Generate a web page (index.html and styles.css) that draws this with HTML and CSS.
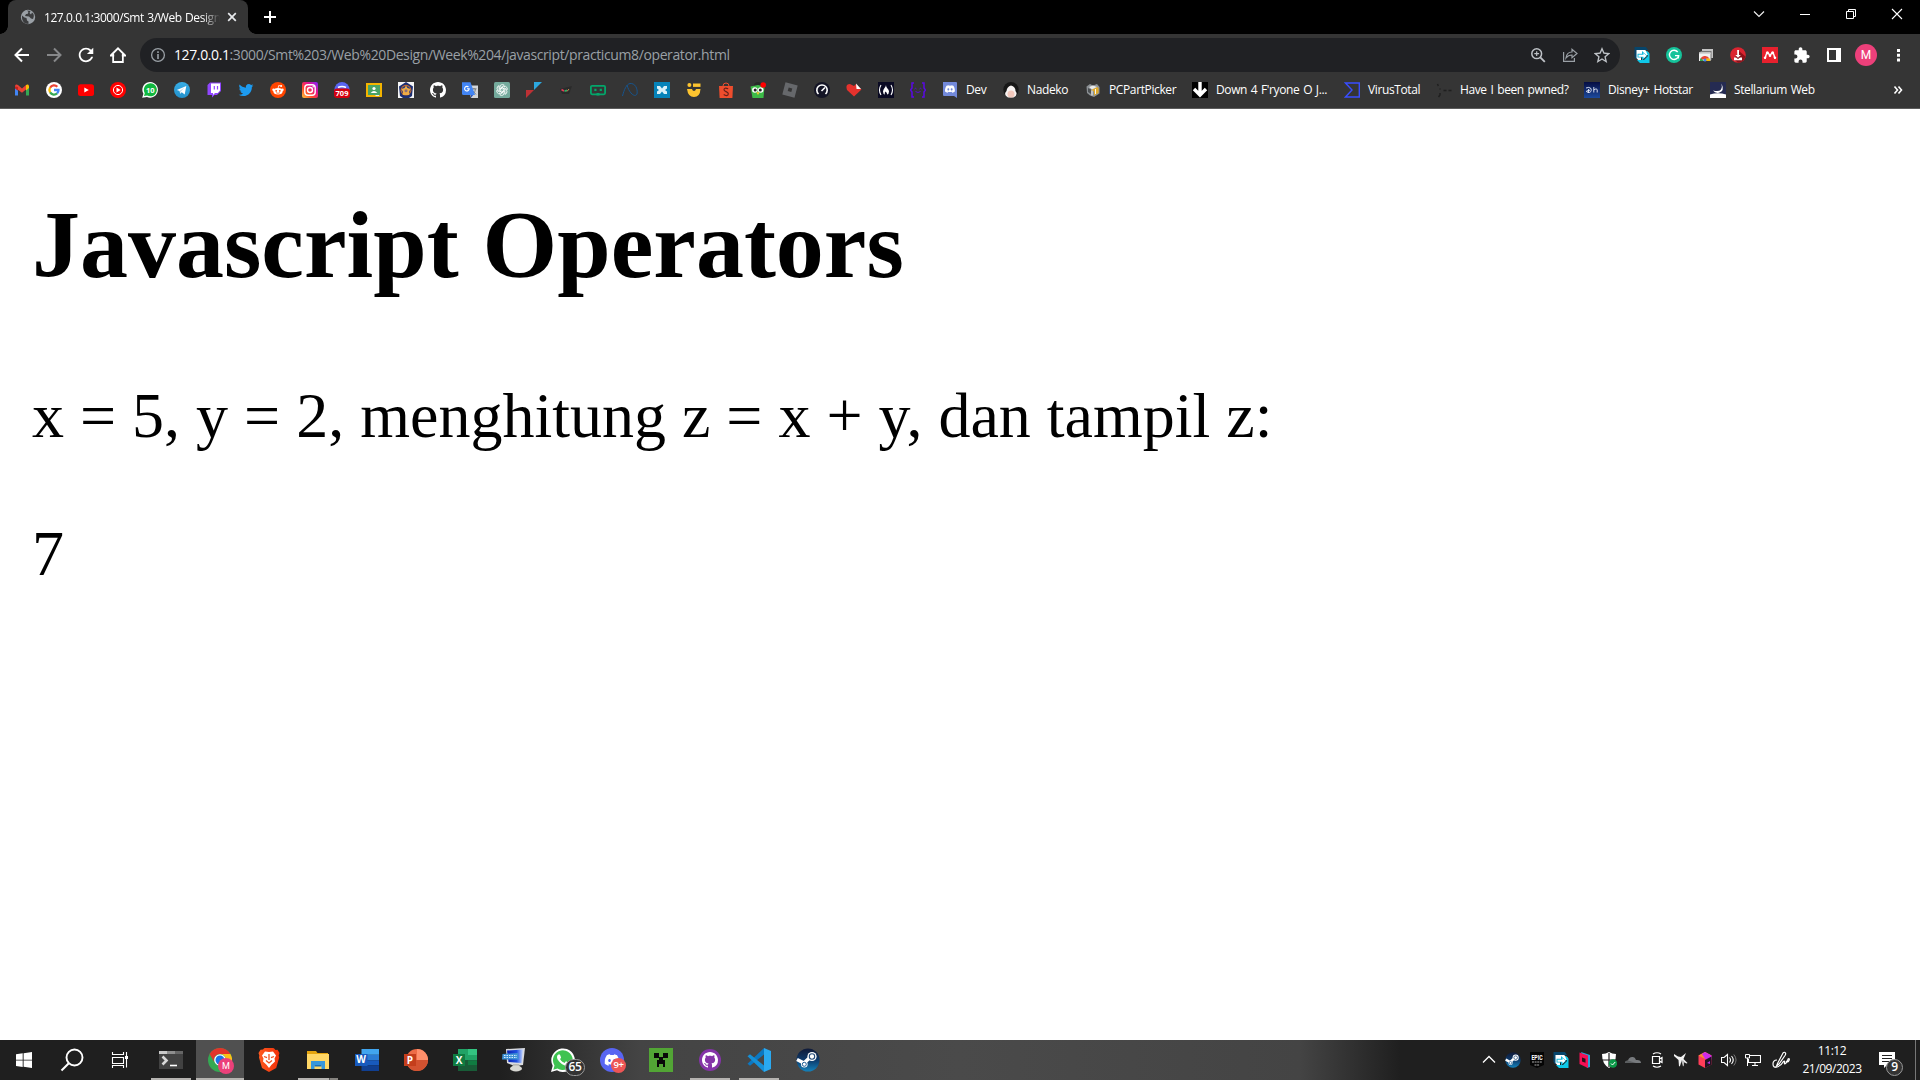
FILE: index.html
```html
<!DOCTYPE html>
<html lang="en">
<head>
<meta charset="utf-8">
<title>127.0.0.1:3000/Smt 3/Web Design</title>
<link rel="stylesheet" href="styles.css">
</head>
<body>
<svg class="defs" width="0" height="0">
  <defs>
    <linearGradient id="insta" x1="0" y1="1" x2="1" y2="0"><stop offset="0" stop-color="#ffc83d"/><stop offset=".35" stop-color="#ff4a2c"/><stop offset=".65" stop-color="#e5128f"/><stop offset="1" stop-color="#7a28ff"/></linearGradient>
    <linearGradient id="steam" x1="0" y1="0" x2="0" y2="1"><stop offset="0" stop-color="#101a38"/><stop offset=".5" stop-color="#0d3a6b"/><stop offset="1" stop-color="#1482bb"/></linearGradient>
    <linearGradient id="hotstar" x1="0" y1="0" x2="0" y2="1"><stop offset="0" stop-color="#060d42"/><stop offset="1" stop-color="#1d4a9c"/></linearGradient>
    <linearGradient id="screen" x1="0" y1="0" x2="1" y2="0"><stop offset="0" stop-color="#0a1fae"/><stop offset=".6" stop-color="#1e4fe0"/><stop offset="1" stop-color="#c4d6ff"/></linearGradient>
    <linearGradient id="tele" x1="0" y1="0" x2="0" y2="1"><stop offset="0" stop-color="#38aee6"/><stop offset="1" stop-color="#2290cb"/></linearGradient>
    <linearGradient id="brave" x1="0" y1="0" x2="1" y2="0"><stop offset="0" stop-color="#ff5a1f"/><stop offset="1" stop-color="#f0300a"/></linearGradient>
    <symbol id="github" viewBox="0 0 16 16"><path fill="#fff" d="M8 0C3.58 0 0 3.58 0 8c0 3.54 2.29 6.53 5.47 7.59.4.07.55-.17.55-.38 0-.19-.01-.82-.01-1.49-2.01.37-2.53-.49-2.69-.94-.09-.23-.48-.94-.82-1.13-.28-.15-.68-.52-.01-.53.63-.01 1.08.58 1.23.82.72 1.21 1.87.87 2.33.66.07-.52.28-.87.51-1.07-1.78-.2-3.64-.89-3.64-3.95 0-.87.31-1.59.82-2.15-.08-.2-.36-1.02.08-2.12 0 0 .67-.21 2.2.82.64-.18 1.32-.27 2-.27s1.36.09 2 .27c1.53-1.04 2.2-.82 2.2-.82.44 1.1.16 1.92.08 2.12.51.56.82 1.27.82 2.15 0 3.07-1.87 3.75-3.65 3.95.29.25.54.73.54 1.48 0 1.07-.01 1.93-.01 2.2 0 .21.15.46.55.38A8.01 8.01 0 0016 8c0-4.42-3.58-8-8-8z"/></symbol>
    <symbol id="discord" viewBox="0 0 24 24"><path fill="#fff" d="M20.317 4.37a19.79 19.79 0 0 0-4.885-1.515c-.21.375-.444.865-.608 1.25a18.27 18.27 0 0 0-5.487 0c-.164-.39-.405-.874-.618-1.25A19.74 19.74 0 0 0 3.677 4.37C.533 9.046-.32 13.58.1 18.058a19.9 19.9 0 0 0 5.993 3.03c.462-.63.873-1.295 1.226-1.994a13 13 0 0 1-1.872-.892l.372-.292c3.928 1.793 8.18 1.793 12.062 0l.373.292a12.3 12.3 0 0 1-1.873.892c.36.698.772 1.362 1.225 1.993a19.84 19.84 0 0 0 6.002-3.03c.5-5.177-.838-9.674-3.549-13.66zM8.02 15.33c-1.183 0-2.157-1.085-2.157-2.419s.956-2.419 2.157-2.419c1.21 0 2.176 1.095 2.157 2.42 0 1.333-.956 2.418-2.157 2.418zm7.975 0c-1.183 0-2.157-1.085-2.157-2.419s.955-2.419 2.157-2.419c1.21 0 2.176 1.095 2.157 2.42 0 1.333-.946 2.418-2.157 2.418z"/></symbol>
    <symbol id="steamlogo" viewBox="0 0 24 24"><circle cx="12" cy="12" r="11.5" fill="url(#steam)"/><path d="M1 11.5 8 15l7-6.500" stroke="#fff" stroke-width="3.600" fill="none"/><circle cx="16" cy="8.500" r="4.600" fill="#fff"/><circle cx="16" cy="8.500" r="2.700" fill="none" stroke="#234a78" stroke-width="1.100"/><circle cx="8.300" cy="16.300" r="3.300" fill="#fff"/><circle cx="8.300" cy="16.300" r="2" fill="none" stroke="#1b5c96" stroke-width="1"/></symbol>
    <symbol id="flow" viewBox="0 0 16 16"><path d="M.5 0H12l2 3H3v9H2L.5 10z" fill="#07456b"/><path d="M2.500 3H11l4 3v2H7v6H5l-2.500-3z" fill="#fff"/><path d="M12 4h1l2.500 2.500V16H6l-3-3h7L14 9z" fill="#0fc8e8"/><path d="M3.500 6.800H8V4l5.200 4.700L8 13.500v-3H3.500z" fill="#12b9de"/><path d="M4.500 7.800h5V6l3 2.700-3 2.800V9.800h-5z" fill="#fff"/></symbol>
  </defs>
</svg>

<header class="browser">
  <div class="tabstrip">
    <div class="tab">
      <svg class="i16" viewBox="0 0 16 16"><circle cx="8" cy="8" r="7.200" fill="#9aa0a6"/><path d="M2 6.500l2.500 2 2 .5.500 2.500 1.500 1V15C4 15 1.500 11.500 2 6.500zM7 1.500l1.500 1.500-1 2H6L5 7l4 .5 2 2 2 .5c1-2 1.500-5-1-6.500L11 5.500 9.500 4l1-2z" fill="#3b3c3e"/></svg>
      <span class="tab-title">127.0.0.1:3000/Smt 3/Web Design</span>
      <svg class="i16 tab-close" viewBox="0 0 16 16"><path d="M4.200 4.200l7.600 7.600M11.800 4.200l-7.600 7.600" stroke="#e8eaed" stroke-width="1.700"/></svg>
    </div>
    <svg class="newtab" viewBox="0 0 16 16"><path d="M8 2v12M2 8h12" stroke="#fff" stroke-width="2"/></svg>
    <div class="controls">
      <svg viewBox="0 0 46 28"><path d="M18 11.500l5 5 5-5" fill="none" stroke="#eee" stroke-width="1.200"/></svg>
      <svg viewBox="0 0 46 28"><path d="M18 14.500h10" stroke="#fff"/></svg>
      <svg viewBox="0 0 46 28"><path d="M18.500 11.500h7v7h-7zM20.500 11.500v-2h7v7h-2" fill="none" stroke="#fff"/></svg>
      <svg viewBox="0 0 46 28"><path d="M18 9l10 10M28 9l-10 10" stroke="#fff" stroke-width="1.100"/></svg>
    </div>
  </div>

  <div class="toolbar">
    <nav class="nav">
      <svg class="i16" viewBox="0 0 16 16"><path d="M15 8H2M8 1.500L1.500 8 8 14.500" fill="none" stroke="#fff" stroke-width="2"/></svg>
      <svg class="i16" viewBox="0 0 16 16"><path d="M1 8h13M8 1.500L14.500 8 8 14.500" fill="none" stroke="#87888a" stroke-width="2"/></svg>
      <svg class="i16" viewBox="3.200 3.200 17.600 17.600"><path fill="#fff" d="M17.650 6.350C16.200 4.900 14.210 4 12 4c-4.420 0-7.990 3.580-7.990 8s3.570 8 7.990 8c3.730 0 6.840-2.550 7.730-6h-2.080c-.82 2.330-3.040 4-5.650 4-3.310 0-6-2.690-6-6s2.690-6 6-6c1.660 0 3.140.69 4.220 1.780L13 11h7V4l-2.350 2.350z"/></svg>
      <svg class="i16" viewBox="0 0 16 16"><path d="M3.200 7v8h9.600V7M.8 8.500L8 1.400l7.200 7.100z" fill="none" stroke="#fff" stroke-width="1.900"/><path d="M4.200 7h7.600v7H4.200z" fill="#353535"/></svg>
    </nav>
    <div class="omnibox">
      <svg class="i16" viewBox="0 0 16 16"><circle cx="8" cy="8" r="6.400" fill="none" stroke="#9aa0a6" stroke-width="1.300"/><path d="M8 7v5M8 4.200V6" stroke="#9aa0a6" stroke-width="1.600"/></svg>
      <span class="url"><b>127.0.0.1</b>:3000/Smt%203/Web%20Design/Week%204/javascript/practicum8/operator.html</span>
      <svg class="i16" viewBox="0 0 16 16"><circle cx="6.700" cy="6.700" r="4.900" fill="none" stroke="#bdc1c6" stroke-width="1.500"/><path d="M10.300 10.300l4.500 4.500" stroke="#bdc1c6" stroke-width="1.900"/><path d="M6.700 4.300v4.800M4.300 6.700h4.800" stroke="#bdc1c6" stroke-width="1.200"/></svg>
      <svg class="i16" viewBox="0 0 16 16"><path d="M1.600 5v9.400h10.800V11" fill="none" stroke="#9aa0a6" stroke-width="1.200"/><path d="M4 11c.5-4 3-6 6-6V2.200L15 6.500l-5 4.200V8C7.500 8 5.500 9 4 11z" fill="none" stroke="#9aa0a6" stroke-width="1.200"/></svg>
      <svg class="i16" viewBox="2.800 2 18.400 19"><path fill="#bdc1c6" d="M22 9.240l-7.190-.62L12 2 9.190 8.630 2 9.240l5.460 4.730L5.820 21 12 17.270 18.180 21l-1.630-7.030L22 9.240zM12 15.400l-3.760 2.270 1-4.280-3.320-2.880 4.380-.38L12 6.100l1.710 4.040 4.380.38-3.320 2.880 1 4.280L12 15.400z"/></svg>
    </div>
    <div class="extensions">
      <svg class="i16" viewBox="0 0 16 16"><use href="#flow"/></svg>
      <svg class="i16" viewBox="0 0 16 16"><circle cx="8" cy="8" r="8" fill="#15c39a"/><path d="M11.700 5A4.600 4.600 0 1 0 12.600 8.600H9M12.700 8.500l-.5 3" fill="none" stroke="#fff" stroke-width="1.400"/></svg>
      <svg class="i16" viewBox="0 0 16 16"><path d="M4 2h11v9H4z" fill="#c4c4c4"/><path d="M2.500 4h11v9h-11z" fill="#777"/><path d="M1 5.500h11.500V14H1z" fill="#f1f1f1"/><path d="M1 5.500h11.500V7H1z" fill="#d5d5d5"/><path d="M2.200 13a5 5 0 0 1 9.300-1.500L8 12z" fill="#ea4335"/><path d="M2 14q-.3-1.500.8-3L6 14z" fill="#34a853"/><path d="M8 11.500h3.500q.7 1 .7 2.500H8z" fill="#fbbc04"/><circle cx="7" cy="13" r="1.500" fill="#4285f4"/></svg>
      <svg class="i16" viewBox="0 0 16 16"><circle cx="8" cy="8" r="7.800" fill="#db2430"/><path d="M9 4l6.500 5.500A8 8 0 0 1 8 15.800L4 12z" fill="#8d1119"/><path d="M7.200 3h1.800v5h1.800L8 10.800 5.300 8h1.900z" fill="#fff"/><path d="M4 10.500h2l2 1.500 2-1.500h2v2.800H4z" fill="#fff"/></svg>
      <svg class="i16" viewBox="0 0 16 16"><path d="M0 0h16v16H0z" fill="#e8212e"/><path d="M3 11.500C4.500 9.500 3 6.500 5.500 6.200 7.500 6 7 8.500 8 8.500s.5-2.500 2.500-2.300c2.500.3 1 3.300 2.500 5.300" fill="none" stroke="#fff" stroke-width="1.500"/><circle cx="5.400" cy="5.800" r="1.500" fill="#fff"/><circle cx="10.600" cy="5.800" r="1.500" fill="#fff"/><circle cx="8" cy="8.800" r="1.300" fill="#fff"/><circle cx="3" cy="10.800" r="1.200" fill="#fff"/><circle cx="13" cy="10.800" r="1.200" fill="#fff"/></svg>
      <svg class="i16" viewBox="1.500 .5 22 22"><path fill="#fff" d="M20.500 11H19V7c0-1.100-.9-2-2-2h-4V3.500C13 2.120 11.880 1 10.500 1S8 2.120 8 3.500V5H4c-1.100 0-1.990.9-1.990 2v3.800H3.500c1.490 0 2.700 1.210 2.700 2.700s-1.210 2.700-2.700 2.700H2V20c0 1.100.9 2 2 2h3.800v-1.500c0-1.490 1.210-2.700 2.700-2.700 1.490 0 2.700 1.210 2.700 2.700V22H17c1.100 0 2-.9 2-2v-4h1.500c1.380 0 2.500-1.120 2.500-2.500S21.880 11 20.500 11z"/></svg>
      <svg class="i16" viewBox="0 0 16 16"><path d="M1 1h14v14H1zM3 3v10h7V3z" fill="#fff" fill-rule="evenodd"/></svg>
      <span class="avatar">M</span>
      <svg class="i16" viewBox="0 0 16 16"><path d="M7 2h3v3H7zM7 6.800h3v3H7zM7 11.600h3v3H7z" fill="#fff"/></svg>
    </div>
  </div>

  <div class="bookmarks">
    <svg class="i16" viewBox="0 0 16 16"><path d="M1 3.500v10h3V8z" fill="#4285f4"/><path d="M15 3.500v10h-3V8z" fill="#34a853"/><path d="M1 4.500C1 2 3 2 4 3l4 3.500L12 3v4.500L8 10.800 1 5.500z" fill="#ea4335"/><path d="M12 3c1-1 3-1 3 1.500V6l-3 2.500z" fill="#fbbc04"/><path d="M1 4.500v2l3 2.200V5z" fill="#c5221f"/></svg>
    <svg class="i16" viewBox="0 0 16 16"><circle cx="8" cy="8" r="8" fill="#fff"/><g fill="none" stroke-width="2.300"><path d="M11.300 4.700A4.600 4.600 0 0 0 4.100 5.700" stroke="#ea4335"/><path d="M4.100 5.700a4.600 4.600 0 0 0 0 4.700" stroke="#fbbc05"/><path d="M4.100 10.400a4.600 4.600 0 0 0 7 1" stroke="#34a853"/><path d="M11.100 11.400A4.600 4.600 0 0 0 12.500 8H8" stroke="#4285f4"/></g></svg>
    <svg class="i16" viewBox="0 0 16 16"><rect y="2.300" width="16" height="11.600" rx="2.500" fill="#f00"/><path d="M6.300 5.500v5L10.800 8z" fill="#fff"/></svg>
    <svg class="i16" viewBox="0 0 16 16"><circle cx="8" cy="8" r="8" fill="#f00"/><circle cx="8" cy="8" r="4.600" fill="none" stroke="#fff"/><path d="M6.500 5.500v5L10.700 8z" fill="#fff"/></svg>
    <svg class="i16" viewBox="0 0 16 16"><path d="M.2 15.800l1.200-4A7.800 7.800 0 1 1 5 15z" fill="#fff"/><path d="M2 14l.8-2.800A6.500 6.500 0 1 1 5.200 13.500z" fill="#11b83f"/><text x="8.200" y="10.900" class="badge-num" text-anchor="middle">10</text></svg>
    <svg class="i16" viewBox="0 0 16 16"><circle cx="8" cy="8" r="8" fill="url(#tele)"/><path d="M2.800 7.900l9.500-3.900-1.600 8.400-3-2.100-1.500 1.500-.5-2.900z" fill="#fff"/><path d="M5.500 9l5-3.500-3.900 4.300-.4 2z" fill="#b9d9ec"/></svg>
    <svg class="i16" viewBox="0 0 16 16"><path d="M1.500 3L4 .5h11v8.500l-4 4H8.500L6 15.500V13H1.500z" fill="#9146ff"/><path d="M5 1.500h9v7L11.800 11H9l-2 2v-2H5z" fill="#fff"/><path d="M8.300 4v3.500M11.500 4v3.500" stroke="#9146ff" stroke-width="1.200"/></svg>
    <svg class="i16" viewBox="-1 0 26 24"><path fill="#1d9bf0" d="M23.953 4.570a10 10 0 01-2.825.775 4.958 4.958 0 002.163-2.723c-.951.555-2.005.959-3.127 1.184a4.920 4.920 0 00-8.384 4.482C7.690 8.095 4.067 6.130 1.640 3.162a4.822 4.822 0 00-.666 2.475c0 1.710.87 3.213 2.188 4.096a4.904 4.904 0 01-2.228-.616v.06a4.923 4.923 0 003.946 4.827 4.996 4.996 0 01-2.212.085 4.936 4.936 0 004.604 3.417 9.867 9.867 0 01-6.102 2.105c-.39 0-.779-.023-1.170-.067a13.995 13.995 0 007.557 2.209c9.053 0 13.998-7.496 13.998-13.985 0-.21 0-.42-.015-.63A9.935 9.935 0 0024 4.590z"/></svg>
    <svg class="i16" viewBox="0 0 16 16"><circle cx="8" cy="8" r="8" fill="#ff4500"/><ellipse cx="8" cy="9.300" rx="4.600" ry="3.200" fill="#fff"/><circle cx="3.500" cy="7.800" r="1.200" fill="#fff"/><circle cx="12.500" cy="7.800" r="1.200" fill="#fff"/><path d="M8 6.500l.7-3 2.300.5" stroke="#fff" stroke-width=".8" fill="none"/><circle cx="11.200" cy="4" r="1" fill="#fff"/><circle cx="6.200" cy="8.800" r=".9" fill="#ff4500"/><circle cx="9.800" cy="8.800" r=".9" fill="#ff4500"/><path d="M6 10.700q2 1.200 4 0" stroke="#ff4500" stroke-width=".7" fill="none"/></svg>
    <svg class="i16" viewBox="0 0 16 16"><rect width="16" height="16" rx="2" fill="url(#insta)"/><rect x="2.800" y="2.800" width="10.400" height="10.400" rx="3" fill="none" stroke="#fff" stroke-width="1.400"/><circle cx="8" cy="8" r="2.500" fill="none" stroke="#fff" stroke-width="1.400"/><circle cx="11.200" cy="4.800" r=".8" fill="#fff"/></svg>
    <svg class="i16" viewBox="0 0 16 16"><circle cx="8" cy="7.500" r="7.500" fill="#5865f2"/><path d="M4 5.500q4-2 8 0" stroke="#fff" stroke-width="1.500" fill="none"/><rect y="6.500" width="16" height="9.500" rx="3" fill="#d3000f"/><text x="8" y="14.200" class="badge-num" text-anchor="middle">709</text></svg>
    <svg class="i16" viewBox="0 0 16 16"><path d="M0 1h16v14H0z" fill="#f4b400"/><path d="M2 3h12v10H2z" fill="#4aa366"/><circle cx="8" cy="6.500" r="1.600" fill="#fff"/><path d="M4.600 11q3.400-4 6.800 0z" fill="#fff"/><path d="M9.500 13H13v1H9.500z" fill="#eee"/></svg>
    <svg class="i16" viewBox="0 0 16 16"><path d="M0 0h16v16H0z" fill="#f5f5f5"/><path d="M8 0l7 4.500L14 14l-3 2H5l-3-2L1 4.500z" fill="#1c2f72"/><circle cx="8" cy="8.200" r="5.400" fill="#c56b31"/><circle cx="8" cy="8.200" r="4.300" fill="#223c80"/><path d="M8 3.500l1.500 2.500 3 1-1.500 3 .3 3H4.700L5 10 3.500 7l3-1z" fill="#edab46"/><circle cx="8" cy="8.800" r="1.500" fill="#8a6f7a"/></svg>
    <svg class="i16" viewBox="0 0 16 16"><use href="#github"/></svg>
    <svg class="i16" viewBox="0 0 16 16"><path d="M6 3.500h10V16H9z" fill="#d3d5d8"/><path d="M9.500 6.800h5M12 6v1.500M10.500 12q3-2 3-5M10.500 8.500l3.500 4" stroke="#72767b" fill="none" stroke-width=".9"/><path d="M0 .3h8.500L13 13H1.500Q0 13 0 11.500z" fill="#4285f4"/><path d="M8.800 13h2.500L9 15.800z" fill="#3056b5"/><path d="M6.500 5A2.300 2.300 0 1 0 7.200 6.800H5" fill="none" stroke="#fff" stroke-width="1.100"/></svg>
    <svg class="i16" viewBox="0 0 16 16"><rect width="16" height="16" rx="1.500" fill="#74aa9c"/><g fill="none" stroke="#fff" stroke-width=".8"><path id="petal" d="M6 9.200V5q0-2.500 2.300-2.500 1.200 0 2 .8L7.500 5v2.200"/><use href="#petal" transform="rotate(60 8 8)"/><use href="#petal" transform="rotate(120 8 8)"/><use href="#petal" transform="rotate(180 8 8)"/><use href="#petal" transform="rotate(240 8 8)"/><use href="#petal" transform="rotate(300 8 8)"/></g></svg>
    <svg class="i16" viewBox="0 0 16 16"><path d="M8 0h8L8 8z" fill="#2ca8df"/><path d="M0 8h8l-8 8z" fill="#bd3034"/></svg>
    <svg class="i16" viewBox="0 0 16 16"><path d="M2 7l12-3-3 8H4z" fill="#2a2a2a"/><path d="M3.500 7.500l2.500 1.500" stroke="#e33b59" stroke-width="1.600"/><path d="M6.500 9.200l2.500-1" stroke="#2fb36b" stroke-width="1.500"/><path d="M9 9.500l2-2.500" stroke="#c89050"/></svg>
    <svg class="i16" viewBox="0 0 16 16"><rect x=".9" y="3.900" width="14.200" height="8.400" rx="1.200" fill="none" stroke="#03a66a" stroke-width="1.800"/><path d="M4.300 6.700h2.200v2.200H4.300zM9.700 6.700h2.200v2.200H9.700zM6.500 11h3v2.500h-3z" fill="#03a66a"/></svg>
    <svg class="i16" viewBox="0 0 16 16"><path d="M.5 14C2 8 4.500 2 8 1.500c5-.5 8 5 7 10.500-2 4-8-1-10-9" fill="none" stroke="#17548c" stroke-width="1"/></svg>
    <svg class="i16" viewBox="0 0 16 16"><path d="M0 0h16v16H0z" fill="#0683b9"/><path d="M3 4h3l2 2.500L10 4h3v2.500L11 8l2 1.500V12h-3L8 9.500 6 12H3V9.500L5 8 3 6.500z" fill="#d9f0f8"/></svg>
    <svg class="i16" viewBox="0 0 16 16"><circle cx="3.400" cy="3" r="2" fill="#fdc42f"/><path d="M7 1.500h7.500v3.400H7z" fill="#fdc42f"/><path d="M1 7h5q.5 2 2 2t2-2h4.500q-.5 8-6.500 8T1 7z" fill="#fdc42f"/></svg>
    <svg class="i16" viewBox="0 0 16 16"><path d="M5 4q0-3 3-3t3 3" fill="none" stroke="#ee4d2d" stroke-width="1"/><path d="M1 4h14l-.6 12H1.600z" fill="#ee4d2d"/><path d="M10.200 6.800Q6 5.200 6 7.800c0 2.200 4.300 1.500 4.300 4 0 2.600-3 2-4.600.8" fill="none" stroke="#64201a" stroke-width="1.200"/></svg>
    <svg class="i16" viewBox="0 0 16 16"><path d="M4 4q0-4 4-4t4 4" fill="#292929"/><path d="M.5 4.500L8 3l6.500 1.500L13.500 16h-11z" fill="#3dbb48"/><circle cx="4.900" cy="8" r="2.800" fill="#fff"/><circle cx="10.700" cy="8" r="2.800" fill="#fff"/><circle cx="5.200" cy="8" r="1.500" fill="#222"/><circle cx="10.300" cy="8" r="1.500" fill="#222"/><path d="M6.300 10.200h3.200L8 13z" fill="#ffc72d"/><circle cx="13.200" cy="3" r="2.800" fill="#f00"/></svg>
    <svg class="i16" viewBox="0 0 16 16"><path d="M3.500.3l12.200 3.300-3.200 12.100L.3 12.400zM6.700 5.500L5.700 9l3.600 1 1-3.500z" fill="#66686b" fill-rule="evenodd"/></svg>
    <svg class="i16" viewBox="0 0 16 16"><circle cx="8" cy="8" r="8" fill="#141526"/><path d="M4.500 12a5.200 5.200 0 1 1 7 0" fill="none" stroke="#fff" stroke-width="1.600"/><path d="M7.500 9L11 5.500" stroke="#fff" stroke-width="1.600"/></svg>
    <svg class="i16" viewBox="0 0 16 16"><path d="M8 14.500L1 8Q-1 2 4 2l4 2 2-2 5.500 5.500z" fill="#e5322d"/><path d="M10 1.500L15 7h-4.500z" fill="#fff"/></svg>
    <svg class="i16" viewBox="0 0 16 16"><path d="M0 0h16v16H0z" fill="#0a0a23"/><path d="M3 3q-3 5 0 10M13 3q3 5 0 10" fill="none" stroke="#fff" stroke-width="1.100"/><path d="M8 3c0 2-3 4-3 6.500Q5 12 7 12.500 6 11 7.500 9.500 9.500 11 9 12.500q2-.5 2-3C11 7 8 6 8 3z" fill="#fff"/></svg>
    <svg class="i16" viewBox="0 0 16 16"><path d="M4 1H2v5L.5 8 2 10v5h2M12 1h2v5l1.500 2-1.500 2v5h-2" fill="none" stroke="#5a08e5" stroke-width="1.500"/><path d="M4.500 7q1-1.500 2 0M9.500 7q1-1.500 2 0M5.500 9.500q2.500 2 5 0" fill="none" stroke="#5a08e5" stroke-width=".9"/></svg>
    <div class="bm"><svg class="i16" viewBox="0 0 16 16"><path d="M1 0h13q1 0 1 1v15l-3-2H2q-1 0-1-1z" fill="#7289da"/><use href="#discord" x="3" y="2" width="10" height="10"/></svg><span class="w-dev">Dev</span></div>
    <div class="bm"><svg class="i16" viewBox="0 0 16 16"><circle cx="8" cy="7.700" r="7.700" fill="#171717"/><path d="M8 3.500q4.500 1 4.500 5.500 3 4-2 6.500H5Q0 13 3.500 9q.5-4.500 4.500-5.500z" fill="#f7f3f2"/><ellipse cx="8" cy="12" rx="3.500" ry="3.500" fill="#f3c8bc"/></svg><span class="w-nad">Nadeko</span></div>
    <div class="bm"><svg class="i16" viewBox="0 0 16 16"><path d="M1.500 4.500L5 2l3 1.500L12 2l2.500 3v6.500L9 15l-4-1.500L2 11z" fill="#8b9094"/><path d="M6 8l6-3 1.500 1v5L9 13.500V9.500z" fill="#e0aa29"/><path d="M4 5l4-1.500 4 1.500-5 2.500z" fill="#e8eaeb"/><path d="M3 6l3 1.500V12l-3-2z" fill="#4c5053"/><path d="M7 8.500v5M10.500 7v5" stroke="#f4f5f5"/></svg><span class="w-pcp">PCPartPicker</span></div>
    <div class="bm"><svg class="i16" viewBox="0 0 16 16"><path d="M0 0h16v16H0z"/><path d="M8 0v13M2 7l6 6 6-6" fill="none" stroke="#fff" stroke-width="3.400"/></svg><span class="w-down">Down 4 F'ryone O J...</span></div>
    <div class="bm"><svg class="i16" viewBox="0 0 16 16"><path d="M1.500 1h13.800v14H1.500L8 8z" fill="none" stroke="#394eff" stroke-width="1.400"/></svg><span class="w-vt">VirusTotal</span></div>
    <div class="bm"><svg class="i16" viewBox="0 0 16 16"><path d="M1.500 2l.8 2M4 6.500v1M4 11v2l-1.500 2M7.500 8.500h3M12.500 8.500h3" fill="none" stroke="#1f1f1f" stroke-width="1.400"/></svg><span class="w-hibp">Have I been pwned?</span></div>
    <div class="bm"><svg class="i16" viewBox="0 0 16 16"><path d="M0 0h16v16H0z" fill="url(#hotstar)"/><path d="M2 6Q5 4.500 7 6.500 8 10.500 4.500 10.500q-2.500-.5-2-1.500L6 8.200M4.500 7v4M9.800 5v5.500M9.800 8q3-2.200 3.400 0v2.500" fill="none" stroke="#e6ebf9" stroke-width=".9"/></svg><span class="w-dis">Disney+ Hotstar</span></div>
    <div class="bm"><svg class="i16" viewBox="0 0 16 16"><path d="M0 0h16v13H0z" fill="#252b52"/><path d="M0 12.500q8-2.500 16 0V16H0z" fill="#fff"/><path d="M11.500 1.500Q15 9 9 10.800q-4 .7-6-2.300 6 1.500 8-1 1.500-2 .5-6z" fill="#fff"/></svg><span class="w-ste">Stellarium Web</span></div>
    <svg class="i16 more" viewBox="0 0 16 16"><path d="M4.500 4.500L7.500 8l-3 3.500M8.500 4.500l3 3.500-3 3.500" fill="none" stroke="#fff" stroke-width="1.600"/></svg>
  </div>
</header>

<main class="page">
  <h2>Javascript Operators</h2>
  <p>x = 5, y = 2, menghitung z = x + y, dan tampil z:</p>
  <p>7</p>
</main>

<footer class="taskbar">
  <div class="system">
    <svg viewBox="0 0 48 40"><path d="M16 14.300l6.700-1v6.400H16zM23.600 13.200L32 12v7.700h-8.400zM16 20.600h6.700V27L16 26zM23.600 20.600H32V28l-8.400-1.200z" fill="#fff"/></svg>
    <svg viewBox="0 0 48 40"><circle cx="26.500" cy="17.500" r="8" fill="none" stroke="#fff" stroke-width="1.900"/><path d="M20.800 23.200L13.500 30.500" stroke="#fff" stroke-width="2"/></svg>
    <svg viewBox="0 0 48 40"><path d="M16.500 12v2.500h11V12M16.500 17.500h11v6h-11zM16.500 28v-2.500h11V28M30.500 12v15.500" fill="none" stroke="#fff" stroke-width="1.100"/><path d="M29 16h3v3h-3z" fill="#fff"/></svg>
  </div>
  <div class="apps">
    <div class="app running"><svg viewBox="0 0 24 24"><path d="M0 3h24v18H0z" fill="#424242"/><path d="M0 3h8v3H0z" fill="#c9c9c9"/><path d="M8 3h8v3H8z" fill="#8e8e8e"/><path d="M16 3h8v3h-8z" fill="#666"/><path d="M3.500 8.500l4 4-4 4" fill="none" stroke="#d8d8d8" stroke-width="2.600"/><path d="M11 17.500h7" stroke="#fff" stroke-width="1.600"/></svg></div>
    <div class="app active"><svg viewBox="0 0 24 24"><circle cx="12" cy="12" r="12" fill="#34a853"/><path d="M1.600 6A12 12 0 0 1 22.400 6H12a6 6 0 0 0-5.200 9z" fill="#e2342b"/><path d="M22.400 6A12 12 0 0 1 12 24l5.200-9A6 6 0 0 0 12 6z" fill="#fbc116"/><circle cx="12" cy="12" r="5.800" fill="#fff"/><circle cx="12" cy="12" r="4.500" fill="#1a73e8"/></svg><span class="mini-avatar">M</span></div>
    <div class="app"><svg viewBox="0 0 24 24"><path d="M6 1.500Q7.500-.5 9 0h6q2-.5 3.500 2l2-.2 2 3.200-.8 2.500.5 2-3 10.500L12 24l-7-4L2 9.500l.3-2L1.500 5l2-3.200z" fill="url(#brave)"/><path d="M12 4l4-.5 3 4-1.500 3 .5 3-3.500 3.300L12 20l-2.500-3.200L6 13.500l.5-3L5 7.500l3-4z" fill="#fff"/><path d="M7 8.500l3 1.200M17 8.500l-3 1.200M12 6v6M9 12.500l3 2.500 3-2.500" fill="none" stroke="#f2501f" stroke-width="1.300"/></svg></div>
    <div class="app running grouped"><svg viewBox="0 0 24 24"><path d="M1 3h9l1.500 2H22v5H1z" fill="#e5a50f"/><path d="M1 6h22v15H1z" fill="#ffd766"/><path d="M5 13h14v8h-3.500v-4h-7v4H5z" fill="#3797dc"/><path d="M8.500 17h7v1.500h-7z" fill="#1b6eb8"/></svg></div>
    <div class="app"><svg viewBox="0 0 24 24"><path d="M6.500 1H24v5.800H6.500z" fill="#41a5ee"/><path d="M6.500 6.800H24v5.400H6.500z" fill="#2b7cd3"/><path d="M6.500 12.200H24v5H6.500z" fill="#185abd"/><path d="M6.500 17.200H24V23H6.500z" fill="#103f91"/><path d="M0 6h12.500v12H0z" fill="#185abd"/><text x="6.200" y="15.300" class="office" text-anchor="middle">W</text></svg></div>
    <div class="app"><svg viewBox="0 0 24 24"><circle cx="13" cy="12" r="11" fill="#ed6c47"/><path d="M13 1a11 11 0 0 1 11 11H13z" fill="#ff8f6b"/><path d="M2 12h22a11 11 0 0 1-22 0z" fill="#d35230"/><path d="M0 6h12v12H0z" fill="#c43e1c"/><text x="6" y="15.500" class="office" text-anchor="middle">P</text></svg></div>
    <div class="app"><svg viewBox="0 0 24 24"><path d="M5 1h10v11H5z" fill="#21a366"/><path d="M15 1h9v6h-9z" fill="#33c481"/><path d="M15 7h9v5.500h-9z" fill="#21a366"/><path d="M5 12h10v11H5z" fill="#185c37"/><path d="M15 12.500h9V17h-9z" fill="#107c41"/><path d="M5 17h19v6H5z" fill="#185c37"/><path d="M0 6h12v12H0z" fill="#107c41"/><text x="6" y="15.500" class="office" text-anchor="middle">X</text></svg></div>
    <div class="app"><svg viewBox="0 0 24 24"><path d="M4 1l19-1-2 17-8 1L5 15z" fill="#d9dbe0"/><path d="M5 2.500l16-1-1.500 13.500-13-1z" fill="url(#screen)"/><path d="M11 16h6l1 4h-8z" fill="#b9b9b5"/><ellipse cx="14" cy="20.500" rx="6" ry="3" fill="#d7d7d2"/><path d="M.5 6L16 5l1 6.500L0 11.500z" fill="#3f91d4"/><path d="M2 7.500h13M2 9.500h13" stroke="#d5ebff" stroke-dasharray="1.500 1"/></svg></div>
    <div class="app"><svg viewBox="0 0 24 24"><path d="M0 24l1.700-6.200A11.800 11.800 0 1 1 6 22.300z" fill="#fff"/><path d="M2.300 21.700l1.200-4.200a9.900 9.900 0 1 1 3 3z" fill="#3fc351"/><path fill="#fff" d="M17.472 14.382c-.297-.149-1.758-.867-2.030-.967-.273-.099-.471-.148-.67.15-.197.297-.767.966-.94 1.164-.173.199-.347.223-.644.075-.297-.15-1.255-.463-2.390-1.475-.883-.788-1.480-1.761-1.653-2.059-.173-.297-.018-.458.13-.606.134-.133.298-.347.446-.52.149-.174.198-.298.298-.497.099-.198.05-.371-.025-.52-.075-.149-.669-1.612-.916-2.207-.242-.579-.487-.5-.669-.51-.173-.008-.371-.01-.57-.01-.198 0-.52.074-.792.372-.272.297-1.040 1.016-1.040 2.479 0 1.462 1.065 2.875 1.213 3.074.149.198 2.096 3.200 5.077 4.487.709.306 1.262.489 1.694.625.712.227 1.360.195 1.871.118.571-.085 1.758-.719 2.006-1.413.248-.694.248-1.289.173-1.413-.074-.124-.272-.198-.57-.347"/></svg><span class="count">65</span></div>
    <div class="app"><svg viewBox="0 0 24 24"><circle cx="12" cy="12" r="12" fill="#5865f2"/><use href="#discord" x="4.500" y="4.500" width="15" height="15"/></svg><span class="mini-count">9+</span></div>
    <div class="app"><svg viewBox="0 0 24 24"><path d="M0 0h24v24H0z" fill="#52a535"/><path d="M5 5h5v5H5zM14 5h5v5h-5zM10 9h4v3h2v7h-2v-3h-4v3H8v-7h2z" fill="#080808"/></svg></div>
    <div class="app running"><svg viewBox="0 0 24 24"><circle cx="12" cy="12" r="11" fill="#8534a8"/><use href="#github" x="4" y="4" width="16" height="16"/></svg></div>
    <div class="app running"><svg viewBox="0 0 24 24"><path d="M17 0l7 3v18l-7 3z" fill="#2aa9f0"/><path d="M17 6.500L3 17.800l-2.500-2L17 0z" fill="#0b78c2"/><path d="M17 17.500L3 6.200l-2.500 2L17 24z" fill="#1590d8"/></svg></div>
    <div class="app"><svg viewBox="0 0 24 24"><use href="#steamlogo"/></svg></div>
  </div>
  <div class="tray">
    <svg viewBox="0 0 16 16"><path d="M2 10.500l6-6 6 6" fill="none" stroke="#fff" stroke-width="1.300"/></svg>
    <svg viewBox="0 0 16 16"><use href="#steamlogo"/></svg>
    <svg viewBox="0 0 16 16"><path d="M1 0h14v13l-7 3-7-3z" fill="#050505"/><text x="0" y="0" class="epic" text-anchor="middle" transform="translate(8 8) scale(.8 1.200)">EPIC</text><path d="M3 10h10M5.500 13h5" stroke="#aaa" stroke-width="1" stroke-dasharray="2 .6"/></svg>
    <svg viewBox="0 0 16 16"><use href="#flow"/></svg>
    <svg viewBox="0 0 16 16"><path d="M4 0l9 3v12l-3 1z" fill="#2c9fd8"/><path d="M2.500.5l8.500 3V16l-8.500-4z" fill="#f50f55"/><path d="M5 5.500l3.500 1.300v4L5 9.500z" fill="#22131b"/></svg>
    <svg viewBox="0 0 16 16"><path d="M8 0q3 2 7 2 0 10-7 14Q1 12 1 2q4 0 7-2z" fill="#fff"/><path d="M8 1v14M1 8h14" stroke="#1f1f1f" stroke-width="1.200"/><circle cx="12" cy="11.500" r="4.200" fill="#0c9848"/><path d="M10 11.500l1.500 1.500 2.700-3" fill="none" stroke="#fff"/></svg>
    <svg viewBox="0 0 16 16"><path d="M0 11q0-2.500 3-2.500 1-4 5-3.500 2 0 3 3 5-.5 5 3z" fill="#777a7d"/><path d="M3 8.500l8 2.500H0q0-2.500 3-2.500z" fill="#5b5e60"/></svg>
    <svg viewBox="0 0 16 16"><path d="M3.500 4.500h7v7h-7zM10.500 7l2.500-1.500v5L10.500 9M4 2q4-2.500 8 0M4 14q4 2.500 8 0" fill="none" stroke="#fff" stroke-width="1.200"/></svg>
    <svg viewBox="0 0 16 16"><path d="M1 2l4 2.500 3 .5 5-4-2.500 6 4 4-1 .5-5-2.500L7 14l-1 .5L5.500 8 1 4z" fill="#f2f2f2"/><path d="M8 8l2 6.500 1-1V9" fill="#bbb"/></svg>
    <svg viewBox="0 0 16 16"><path d="M8 0l6.500 3.500v9L8 16l-6.500-3.500v-9z" fill="#ff3d58"/><path d="M8 0l6.500 3.500L8 7 1.500 3.500z" fill="#fa8b30"/><path d="M8 0l6.500 3.500v4L8 7 5 2z" fill="#cf2be9"/><path d="M8 8l6.500-3.500v8L8 16z" fill="#221124"/><path d="M10 11l3-2v3z" fill="#b432df"/></svg>
    <svg viewBox="0 0 16 16"><path d="M.5 5.500H3l3.500-3v11L3 10.500H.5zM8.500 5.500q2 2.500 0 5M10.500 4q3.500 4 0 8" fill="none" stroke="#fff" stroke-width="1.100"/><path d="M12.800 2.500q4.500 5.500 0 11" fill="none" stroke="#777"/></svg>
    <svg viewBox="0 0 16 16"><path d="M5 3.500h10.500v7h-12V7M7 13.500h6M10 10.500v3" fill="none" stroke="#fff" stroke-width="1.100"/><path d="M.5 2.500h4V6h-4zM2.500 6v8" fill="none" stroke="#fff"/></svg>
    <svg class="pen" viewBox="0 0 18 18"><path d="M5.500 12.500L11 2q1.500-1.500 2.500 0 .5 1-.5 2.500L7 13l-2.500 2z" fill="none" stroke="#fff" stroke-width="1.200"/><path d="M5 9Q1 9 1 13t4 3q4-1 6-5 2-2 1.500.5T14 12t2-4q2-1 1 1.500t-3 .5" fill="none" stroke="#fff" stroke-width="1.200"/></svg>
  </div>
  <time class="clock"><span>11:12</span><span>21/09/2023</span></time>
  <div class="notify"><svg viewBox="0 0 16 16"><path d="M0 0h16v13H8l-3 3v-3H0z" fill="#fff"/><path d="M3 3.500h10M3 6.500h10M3 9.500h7" stroke="#222" stroke-width="1.100"/></svg><span class="count small">9</span></div>
  <div class="peek"></div>
</footer>
</body>
</html>
```
FILE: styles.css
```css
* { box-sizing: border-box; }
body {
  margin: 0;
  width: 1920px;
  height: 1080px;
  display: flex;
  flex-direction: column;
  overflow: hidden;
  background: #fff;
  font-family: "Open Sans", "Noto Sans", sans-serif;
  font-size: 12px;
  color: #fff;
}
.defs { position: absolute; }
svg { display: block; flex: none; }
.i16 { width: 16px; height: 16px; }

.browser { flex: none; height: 109px; background: #353535; border-bottom: 1px solid #5c5c5c; }
.tabstrip { display: flex; height: 34px; background: #000; padding-left: 8px; }
.tab {
  position: relative;
  display: flex;
  align-items: center;
  width: 240px;
  padding: 0 8px 0 12px;
  background: #353535;
  border-radius: 8px 8px 0 0;
}
.tab::before, .tab::after {
  content: "";
  position: absolute;
  bottom: 0;
  width: 8px;
  height: 8px;
}
.tab::before { left: -8px; background: radial-gradient(circle at 0 0, transparent 7.5px, #353535 8px); }
.tab::after { right: -8px; background: radial-gradient(circle at 100% 0, transparent 7.5px, #353535 8px); }
.tab-title {
  width: 176px;
  margin-left: 8px;
  overflow: hidden;
  white-space: nowrap;
  letter-spacing: -.43px;
  word-spacing: .8px;
  -webkit-mask-image: linear-gradient(90deg, #000 158px, transparent);
  mask-image: linear-gradient(90deg, #000 158px, transparent);
}
.tab-close { margin-left: 4px; }
.newtab { width: 16px; height: 16px; margin: 9px 0 0 14px; }
.controls { display: flex; margin-left: auto; }
.controls svg { width: 46px; height: 28px; }

.toolbar { display: flex; align-items: center; height: 42px; }
.nav { display: flex; gap: 16px; padding-left: 14px; width: 140px; }
.omnibox {
  display: flex;
  align-items: center;
  gap: 16px;
  width: 1480px;
  height: 34px;
  padding: 0 10px;
  border-radius: 17px;
  background: #202124;
}
.url {
  flex: 1;
  margin-left: -8px;
  padding-bottom: 2px;
  font-size: 14px;
  letter-spacing: -.39px;
  white-space: nowrap;
  color: #9aa0a6;
}
.url b { color: #fff; font-weight: 400; }
.extensions { display: flex; align-items: center; gap: 16px; padding-left: 14px; }
.avatar {
  width: 22px;
  height: 22px;
  margin: 0 -3px;
  border-radius: 50%;
  background: #ec407a;
  text-align: center;
  font: 12px/22px Roboto, sans-serif;
}

.bookmarks { display: flex; align-items: center; gap: 16px; height: 28px; padding-left: 14px; }
.bm { display: flex; align-items: center; gap: 8px; }
.bm span { white-space: nowrap; line-height: 16px; letter-spacing: -.38px; word-spacing: 1px; }
.w-dev { width: 21px; }
.w-nad { width: 42px; }
.w-pcp { width: 67px; }
.w-down { width: 112px; }
.w-vt { width: 52px; }
.w-hibp { width: 108px; }
.w-dis { width: 86px; }
.w-ste { width: 80px; }
.more { margin: 0 14px 0 auto; }
.badge-num { font: 700 7.500px "Open Sans", sans-serif; fill: #fff; }

.page {
  flex: 1;
  padding: 0 32px;
  color: #000;
  font-family: "Liberation Serif", "Times New Roman", serif;
  font-size: 64px;
}
.page h2 { margin: 79.680px 0; font-size: 96px; line-height: normal; }
.page p { margin: 64px 0; }

.taskbar {
  flex: none;
  display: flex;
  height: 40px;
  background: linear-gradient(90deg, #1f1f1f 0, #1f1f1f 500px, #444 640px, #4a4a4a 960px, #444 1300px, #1f1f1f 1400px);
}
.system { display: flex; width: 147px; }
.system svg { width: 48px; height: 40px; }
.apps { display: flex; gap: 1px; }
.app {
  position: relative;
  display: flex;
  justify-content: center;
  width: 48px;
  height: 40px;
  padding-top: 8px;
}
.app svg { width: 24px; height: 24px; }
.running::after {
  content: "";
  position: absolute;
  left: 4px;
  bottom: 0;
  width: 40px;
  height: 2px;
  background: #b5b3b0;
}
.grouped::after { background: linear-gradient(90deg, #b5b3b0 31px, #555 31px, #555 32px, #85837f 32px); }
.active { background: #505050; border-bottom: 2px solid #b5b3b0; }
.office { font: 700 10px "Open Sans", sans-serif; fill: #fff; }
.mini-avatar, .mini-count {
  position: absolute;
  left: 22px;
  top: 18px;
  width: 16px;
  height: 16px;
  border-radius: 50%;
  background: #ec407a;
  text-align: center;
  font: 9px/16px Roboto, sans-serif;
}
.mini-count {
  left: 23px;
  width: 15px;
  height: 15px;
  background: #ed5555;
  font: 600 9.500px/14px "Open Sans", sans-serif;
  letter-spacing: -.5px;
}
.count {
  position: absolute;
  left: 26px;
  top: 19px;
  width: 20px;
  height: 17px;
  border: 1px solid #999;
  border-radius: 9px;
  background: #333;
  text-align: center;
  font: 600 12px/14px "Open Sans", sans-serif;
  letter-spacing: -.4px;
}
.count.small { left: 18px; top: 19px; width: 17px; }

.tray { display: flex; align-items: center; gap: 8px; margin-left: auto; }
.tray svg { width: 16px; height: 16px; }
.tray .pen { width: 18px; height: 18px; margin-left: 3px; }
.epic { font: 700 6.500px Roboto, sans-serif; fill: #fff; }
.clock {
  display: flex;
  flex-direction: column;
  width: 72px;
  margin-left: 6px;
  padding-top: 2px;
  text-align: center;
  line-height: 18px;
  letter-spacing: -.45px;
}
.notify { position: relative; width: 47px; padding: 12px 0 0 11px; }
.notify svg { width: 16px; height: 16px; }
.peek { width: 5px; border-left: 1px solid #777; }
```
